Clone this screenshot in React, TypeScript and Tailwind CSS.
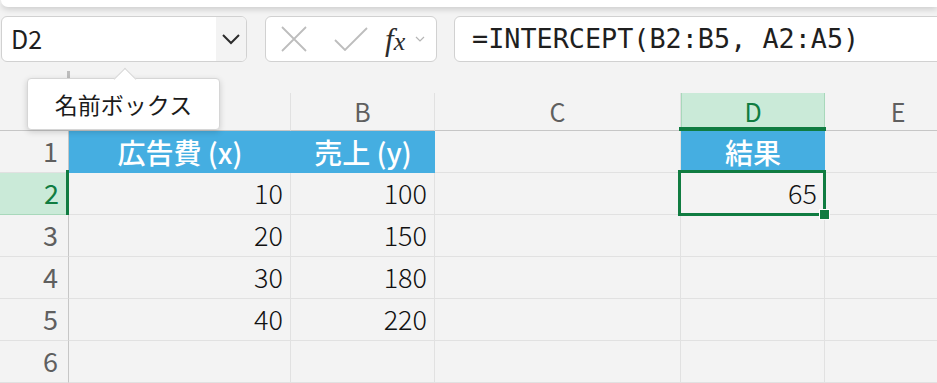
import React from "react";

const COLS = "grid-cols-[69px_222px_144px_246px_144px_146px]";
const font = { fontFamily: '"Noto Sans CJK JP", "Noto Sans", sans-serif' };

const rows: { a?: string; b?: string; d?: string }[] = [
  { a: "10", b: "100", d: "65" },
  { a: "20", b: "150" },
  { a: "30", b: "180" },
  { a: "40", b: "220" },
  {},
];

const Cell = ({ children, className = "" }: { children?: React.ReactNode; className?: string }) => (
  <div className={`h-[42px] border-r border-b border-[#e1e1e1] flex items-center justify-end pr-[7px] text-[27px] font-light text-[#111] ${className}`}>
    {children}
  </div>
);

const HeadCell = ({ children }: { children?: React.ReactNode }) => (
  <div className="h-[42px] bg-[#45aee1] flex items-center justify-center text-[28px] font-medium text-white">
    {children}
  </div>
);

const RowNum = ({ n }: { n: number }) => (
  <div className="h-[42px] bg-[#f3f3f3] border-r border-b border-r-[#c6c6c6] border-b-[#e1e1e1] flex items-center justify-end pr-[10px] text-[27px] text-[#5f5f5f]">
    {n}
  </div>
);

const App = () => {
  return (
    <div className="relative w-[937px] h-[383px] overflow-hidden bg-[#f3f3f3]" style={font}>
      {/* ribbon edge */}
      <div className="h-[7px] ml-px bg-white rounded-bl-lg shadow-[0_2px_6px_rgba(0,0,0,0.18)]" />

      {/* toolbar */}
      <div className="flex mt-[9px] h-[46px]">
        <div className="ml-px w-[246px] flex rounded-md border border-[#d1d1d1] bg-white overflow-hidden">
          <div className="flex-1 flex items-center pl-[9px] text-[25px] text-[#1f1f1f]">D2</div>
          <div className="w-[30px] bg-[#f3f3f3] flex items-center justify-center">
            <svg width="20" height="12" viewBox="0 0 20 12" fill="none" stroke="#2b2b2b" strokeWidth="2">
              <path d="M2 2 L10 10 L18 2" />
            </svg>
          </div>
        </div>
        <div className="ml-[18px] w-[172px] flex items-center rounded-md border border-[#d1d1d1] bg-white">
          <svg className="ml-[15px]" width="26" height="26" viewBox="0 0 26 26" stroke="#bdbdbd" strokeWidth="1.8">
            <path d="M1 1 L25 25 M25 1 L1 25" />
          </svg>
          <svg className="ml-[27px]" width="34" height="24" viewBox="0 0 34 24" fill="none" stroke="#bdbdbd" strokeWidth="1.8">
            <path d="M1 13 L11 23 L33 1" />
          </svg>
          <span className="ml-[17px] text-[31px] leading-none italic text-[#2b2b2b]" style={{ fontFamily: '"Liberation Serif", serif' }}>
            f<span className="text-[26px]">x</span>
          </span>
          <svg className="ml-[10px]" width="10" height="6" viewBox="0 0 10 6" fill="none" stroke="#b5b5b5" strokeWidth="1.2">
            <path d="M1 1 L5 5 L9 1" />
          </svg>
        </div>
        <div className="ml-[17px] flex-1 -mr-2 flex items-center rounded-md border border-[#d1d1d1] bg-white pl-[17px]">
          <span className="text-[26.8px] text-[#1f1f1f]" style={{ fontFamily: '"DejaVu Sans Mono", monospace' }}>
            =INTERCEPT(B2:B5, A2:A5)
          </span>
        </div>
      </div>

      {/* sheet */}
      <div className={`grid ${COLS} mt-[31px]`}>
        {/* column headers */}
        <div className="h-[38px] border-r border-b border-r-[#c6c6c6] border-b-[#c6c6c6]" />
        {["A", "B", "C"].map((c) => (
          <div key={c} className="h-[38px] flex items-center justify-center border-r border-b border-r-[#e1e1e1] border-b-[#c6c6c6] text-[25px] text-[#5f5f5f]">
            {c}
          </div>
        ))}
        <div className="relative h-[38px] flex items-center justify-center bg-[#caead8] border-x border-[#a8d8bb] text-[25px] text-[#107c41]">
          D
          <div className="absolute -left-[3px] -right-[2px] bottom-0 h-[4px] bg-[#107c41]" />
        </div>
        <div className="h-[38px] flex items-center justify-center border-b border-[#c6c6c6] text-[25px] text-[#5f5f5f]">E</div>

        {/* row 1 */}
        <RowNum n={1} />
        <HeadCell>広告費 (x)</HeadCell>
        <HeadCell>売上 (y)</HeadCell>
        <Cell />
        <HeadCell>結果</HeadCell>
        <Cell />

        {rows.map((r, i) => {
          const n = i + 2;
          const active = n === 2;
          return (
            <React.Fragment key={n}>
              {active ? (
                <div className="relative h-[42px] flex items-center justify-end pr-[10px] bg-[#caead8] border-b border-[#a8d8bb] text-[27px] text-[#107c41]">
                  {n}
                  <div className="absolute right-0 -top-[3px] -bottom-px w-[3px] bg-[#107c41]" />
                </div>
              ) : (
                <RowNum n={n} />
              )}
              <Cell>{r.a}</Cell>
              <Cell>{r.b}</Cell>
              <Cell />
              {active ? (
                <Cell className="relative">
                  {r.d}
                  <div className="absolute -left-[3px] -top-[3px] -right-[2px] -bottom-[2px] border-[3px] border-[#107c41]" />
                  <div className="absolute -right-[5px] -bottom-[5px] w-[9px] h-[9px] bg-[#107c41] outline outline-1 outline-white" />
                </Cell>
              ) : (
                <Cell />
              )}
              <Cell />
            </React.Fragment>
          );
        })}
      </div>

      {/* small tick near select-all corner */}
      <div className="absolute left-[67px] top-[71px] w-[3px] h-[8px] bg-[#bdbdbd]" />

      {/* tooltip */}
      <div className="absolute left-[27px] top-[78px] w-[193px] h-[52px] rounded-[4px] border border-[#d6d6d6] bg-white shadow-[0_2px_6px_rgba(0,0,0,0.16)] flex items-center justify-center text-[23px] text-[#1b1b1b]">
        <div className="absolute left-[89px] -top-[8px] w-[16px] h-[16px] rotate-45 bg-white border-l border-t border-[#d6d6d6]" />
        <span className="relative">名前ボックス</span>
      </div>
    </div>
  );
};

export default App;
